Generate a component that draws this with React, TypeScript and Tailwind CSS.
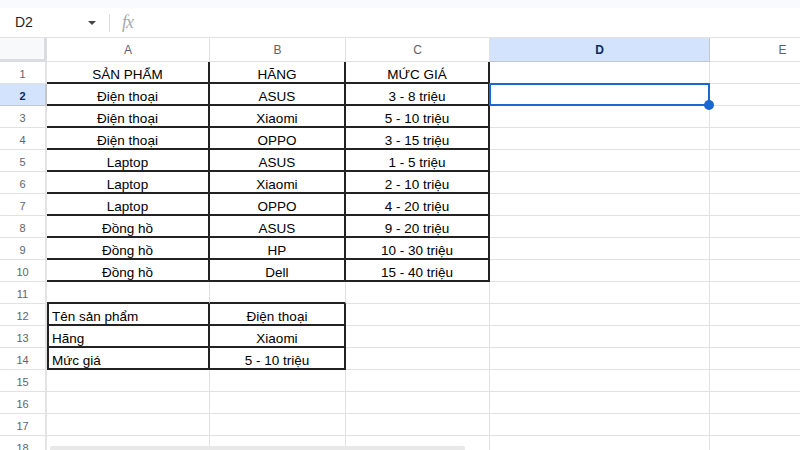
import React from "react";

type Row = { n: number; a?: string; b?: string; c?: string; aLeft?: boolean };

const rows: Row[] = [
  { n: 1, a: "SẢN PHẨM", b: "HÃNG", c: "MỨC GIÁ" },
  { n: 2, a: "Điện thoại", b: "ASUS", c: "3 - 8 triệu" },
  { n: 3, a: "Điện thoại", b: "Xiaomi", c: "5 - 10 triệu" },
  { n: 4, a: "Điện thoại", b: "OPPO", c: "3 - 15 triệu" },
  { n: 5, a: "Laptop", b: "ASUS", c: "1 - 5 triệu" },
  { n: 6, a: "Laptop", b: "Xiaomi", c: "2 - 10 triệu" },
  { n: 7, a: "Laptop", b: "OPPO", c: "4 - 20 triệu" },
  { n: 8, a: "Đồng hồ", b: "ASUS", c: "9 - 20 triệu" },
  { n: 9, a: "Đồng hồ", b: "HP", c: "10 - 30 triệu" },
  { n: 10, a: "Đồng hồ", b: "Dell", c: "15 - 40 triệu" },
  { n: 11 },
  { n: 12, a: "Tên sản phẩm", b: "Điện thoại", aLeft: true },
  { n: 13, a: "Hãng", b: "Xiaomi", aLeft: true },
  { n: 14, a: "Mức giá", b: "5 - 10 triệu", aLeft: true },
  { n: 15 },
  { n: 16 },
  { n: 17 },
  { n: 18 },
];

const GRAY = "border-r border-b border-[#e2e2e2]";
const BLACK = "border-r-2 border-b-2 border-[#222222]";
const BLACK_L = "border-l-2 border-r-2 border-b-2 border-[#222222]";
const ROW11 = "border-r border-b-2 border-r-[#e2e2e2] border-b-[#222222]";

function borderFor(n: number, col: number): string {
  if (n >= 1 && n <= 10 && col <= 3) return BLACK;
  if (n === 11 && col <= 2) return ROW11;
  if (n >= 12 && n <= 14 && col === 1) return BLACK_L;
  if (n >= 12 && n <= 14 && col === 2) return BLACK;
  return GRAY;
}

const cellBase =
  "shrink-0 h-full flex items-start pt-[3.5px] leading-[18px] overflow-hidden whitespace-nowrap text-[13.5px] text-black box-border";

export default function App() {
  return (
    <div
      className="w-[800px] h-[450px] overflow-hidden bg-white relative"
      style={{ fontFamily: '"Liberation Sans", Arial, sans-serif' }}
    >
      {/* top strip */}
      <div className="h-[8px] bg-[#f8fafd]" />
      {/* formula bar */}
      <div className="h-[29px] flex items-center">
        <div className="w-[105px] pl-[15px] flex items-center justify-between pr-[8px]">
          <span className="text-[14px] text-[#1f1f1f]">D2</span>
          <svg width="10" height="6" viewBox="0 0 10 6">
            <path d="M1 1 L9 1 L5 5 Z" fill="#444746" />
          </svg>
        </div>
        <div className="w-px h-[18px] bg-[#dadce0] ml-[4px]" />
        <span
          className="ml-[12px] text-[18px] italic text-[#a8aaad] tracking-[-1px]"
          style={{ fontFamily: '"Liberation Serif", "Times New Roman", serif' }}
        >
          fx
        </span>
      </div>
      {/* column header row */}
      <div className="flex h-[25px] border-t border-[#e2e2e2] text-[12px] text-[#5f6368]">
        <div className="w-[47px] shrink-0 h-full bg-[#f8f9fa] border-r-[3px] border-b-[3px] border-[#dadcdf] box-border" />
        <div className="w-[163px] shrink-0 h-full flex items-center justify-center border-r border-b border-[#e2e2e2] box-border">A</div>
        <div className="w-[136px] shrink-0 h-full flex items-center justify-center border-r border-b border-[#e2e2e2] box-border">B</div>
        <div className="w-[144px] shrink-0 h-full flex items-center justify-center border-r border-b border-[#e2e2e2] box-border">C</div>
        <div className="w-[220px] shrink-0 h-full flex items-center justify-center bg-[#d3e3fd] border-r border-b border-[#c4c7c5] box-border font-bold text-[#0b2a5a]">D</div>
        <div className="w-[146px] shrink-0 h-full flex items-center justify-center border-b border-r border-[#e2e2e2] box-border">E</div>
      </div>
      {/* body */}
      {rows.map((r) => (
        <div key={r.n} className="flex h-[22px]">
          <div
            className={
              r.n === 2
                ? "w-[47px] shrink-0 h-full flex items-start pt-[4px] leading-[16px] justify-center bg-[#d3e3fd] border-r-2 border-b border-[#c4c7c5] box-border text-[11px] font-bold text-[#0b2a5a]"
                : "w-[47px] shrink-0 h-full flex items-start pt-[4px] leading-[16px] justify-center border-r-2 border-b border-[#e2e2e2] box-border text-[11px] text-[#5f6368]"
            }
          >
            {r.n}
          </div>
          <div
            className={`w-[163px] ${cellBase} ${borderFor(r.n, 1)} ${
              r.aLeft ? "justify-start pl-[3px]" : "justify-center"
            }`}
          >
            {r.a}
          </div>
          <div className={`w-[136px] ${cellBase} justify-center ${borderFor(r.n, 2)}`}>{r.b}</div>
          <div className={`w-[144px] ${cellBase} justify-center ${borderFor(r.n, 3)}`}>{r.c}</div>
          <div className="w-[220px] shrink-0 h-full relative border-r border-b border-[#e2e2e2] box-border">
            {r.n === 2 && (
              <div className="absolute z-10 -top-px -left-px w-[221px] h-[23px] border-2 border-[#1a66d2] box-border">
                <div className="absolute -right-[6px] -bottom-[6px] w-[10px] h-[10px] rounded-full bg-[#1a66d2]" />
              </div>
            )}
          </div>
          <div className="w-[146px] shrink-0 h-full border-b border-r border-[#e2e2e2] box-border" />
        </div>
      ))}
      {/* horizontal scrollbar */}
      <div className="absolute left-[50px] bottom-0 w-[415px] h-[4px] rounded-t-[2px] bg-[#e8e8e8]" />
    </div>
  );
}
